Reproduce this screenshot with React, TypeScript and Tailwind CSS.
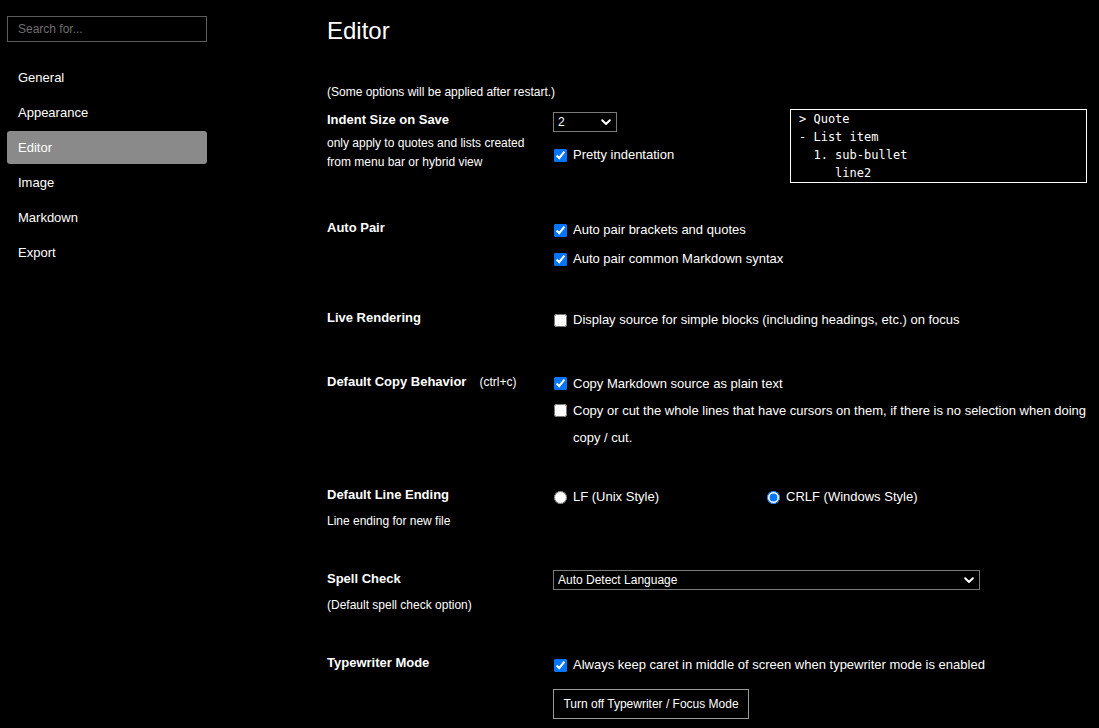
import React, { useState } from "react";

const navItems = ["General", "Appearance", "Editor", "Image", "Markdown", "Export"];

function Chevron() {
    return (
        <svg width="10" height="7" viewBox="0 0 10 7" className="pointer-events-none absolute right-[6px] top-[7px]">
            <path d="M1.2 1.2 L5 5 L8.8 1.2" fill="none" stroke="white" strokeWidth="2" strokeLinecap="round" strokeLinejoin="round" />
        </svg>
    );
}

function Select({ value, options, width }: { value: string, options: string[], width: string }) {
    return (
        <div className={"relative " + width}>
            <select
                defaultValue={value}
                className="block h-[20px] w-full appearance-none rounded-none border border-[#7a7a7a] bg-black pl-[4px] text-[12px] leading-[18px] text-white outline-none"
            >
                {options.map((o) => <option key={o}>{o}</option>)}
            </select>
            <Chevron />
        </div>
    );
}

function Check({ label, checked }: { label: string, checked?: boolean }) {
    return (
        <label className="flex h-[20px] items-center">
            <input type="checkbox" defaultChecked={checked} className="m-0 ml-[1px] h-[13px] w-[13px] accent-[#0075ff]" />
            <span className="ml-[6px] text-[13px]">{label}</span>
        </label>
    );
}

function Radio({ label, checked }: { label: string, checked?: boolean }) {
    return (
        <label className="flex h-[20px] items-center">
            <input type="radio" name="lineEnding" defaultChecked={checked} className="m-0 ml-[1px] h-[13px] w-[13px] accent-[#0075ff]" />
            <span className="ml-[6px] text-[13px]">{label}</span>
        </label>
    );
}

export default function App() {
    const [search, setSearch] = useState("");

    return (
        <div className="flex min-h-[728px] w-full bg-black text-white" style={{ fontFamily: '"Liberation Sans", Arial, sans-serif' }}>
            {/* sidebar */}
            <div className="w-[214px] shrink-0 px-[7px] pt-[16px]">
                <input
                    className="h-[26px] w-full border border-[#5c5c5c] bg-black px-[10px] text-[12px] text-white outline-none placeholder:text-[#6e6e6e]"
                    placeholder="Search for..."
                    value={search}
                    onChange={(e) => setSearch(e.target.value)}
                />
                <div className="mt-[19px] flex flex-col gap-[2px]">
                    {navItems.map((item) => (
                        <div
                            key={item}
                            className={"flex h-[33px] items-center rounded-[3px] pl-[11px] text-[13px] " + (item === "Editor" ? "bg-[#8a8a8a]" : "")}
                        >
                            {item}
                        </div>
                    ))}
                </div>
            </div>

            {/* content */}
            <div className="flex-1 pl-[113px] pt-[15px]">
                <h1 className="text-[24px] leading-[32px]">Editor</h1>
                <p className="mt-[37px] text-[12px] leading-[16px]">(Some options will be applied after restart.)</p>

                {/* Indent size */}
                <div className="mt-[10px] flex h-[108px]">
                    <div className="w-[226px] shrink-0">
                        <div className="text-[13px] font-bold leading-[20px]">Indent Size on Save</div>
                        <div className="mt-[4px] text-[12px] leading-[19px]">
                            only apply to quotes and lists created<br />from menu bar or hybrid view
                        </div>
                    </div>
                    <div className="flex">
                        <div className="w-[237px] pt-[2px]">
                            <Select value="2" options={["2", "4"]} width="w-[64px]" />
                            <div className="mt-[13px]">
                                <Check label="Pretty indentation" checked />
                            </div>
                        </div>
                        <pre
                            className="-mt-[1px] h-[74px] w-[297px] border border-white pl-[8px] text-[12px] leading-[18px] text-white"
                            style={{ fontFamily: '"DejaVu Sans Mono", "Liberation Mono", monospace' }}
                        >
                            {"> Quote\n- List item\n  1. sub-bullet\n     line2"}
                        </pre>
                    </div>
                </div>

                {/* Auto pair */}
                <div className="flex h-[90px]">
                    <div className="w-[226px] shrink-0 text-[13px] font-bold leading-[20px]">Auto Pair</div>
                    <div className="flex flex-col gap-[9px] pt-[2px]">
                        <Check label="Auto pair brackets and quotes" checked />
                        <Check label="Auto pair common Markdown syntax" checked />
                    </div>
                </div>

                {/* Live rendering */}
                <div className="flex h-[64px]">
                    <div className="w-[226px] shrink-0 text-[13px] font-bold leading-[20px]">Live Rendering</div>
                    <div className="pt-[2px]">
                        <Check label="Display source for simple blocks (including headings, etc.) on focus" />
                    </div>
                </div>

                {/* Copy behavior */}
                <div className="flex h-[113px]">
                    <div className="w-[226px] shrink-0 text-[13px] leading-[20px]">
                        <span className="font-bold">Default Copy Behavior</span>
                        <span className="ml-[13px] text-[12px]">(ctrl+c)</span>
                    </div>
                    <div className="-mt-[2px] flex flex-col">
                        <label className="flex h-[27px] items-center">
                            <input type="checkbox" defaultChecked className="m-0 ml-[1px] h-[13px] w-[13px] accent-[#0075ff]" />
                            <span className="ml-[6px] text-[13px]">Copy Markdown source as plain text</span>
                        </label>
                        <label className="flex items-start">
                            <input type="checkbox" className="m-0 ml-[1px] mt-[7px] h-[13px] w-[13px] shrink-0 accent-[#0075ff]" />
                            <span className="ml-[6px] w-[514px] text-[13px] leading-[27px]">
                                Copy or cut the whole lines that have cursors on them, if there is no selection when doing copy / cut.
                            </span>
                        </label>
                    </div>
                </div>

                {/* Line ending */}
                <div className="flex h-[84px]">
                    <div className="w-[226px] shrink-0">
                        <div className="text-[13px] font-bold leading-[20px]">Default Line Ending</div>
                        <div className="mt-[6px] text-[12px] leading-[20px]">Line ending for new file</div>
                    </div>
                    <div className="flex pt-[2px]">
                        <div className="w-[213px]">
                            <Radio label="LF (Unix Style)" />
                        </div>
                        <Radio label="CRLF (Windows Style)" checked />
                    </div>
                </div>

                {/* Spell check */}
                <div className="flex h-[84px]">
                    <div className="w-[226px] shrink-0">
                        <div className="text-[13px] font-bold leading-[20px]">Spell Check</div>
                        <div className="mt-[6px] text-[12px] leading-[20px]">(Default spell check option)</div>
                    </div>
                    <div className="pt-[1px]">
                        <Select value="Auto Detect Language" options={["Auto Detect Language", "English (US)"]} width="w-[427px]" />
                    </div>
                </div>

                {/* Typewriter */}
                <div className="flex">
                    <div className="w-[226px] shrink-0 text-[13px] font-bold leading-[20px]">Typewriter Mode</div>
                    <div className="pt-[2px]">
                        <Check label="Always keep caret in middle of screen when typewriter mode is enabled" checked />
                        <button className="mt-[14px] h-[30px] w-[196px] border border-[#9a9a9a] bg-black text-[12px] text-white">
                            Turn off Typewriter / Focus Mode
                        </button>
                    </div>
                </div>
            </div>
        </div>
    );
}
